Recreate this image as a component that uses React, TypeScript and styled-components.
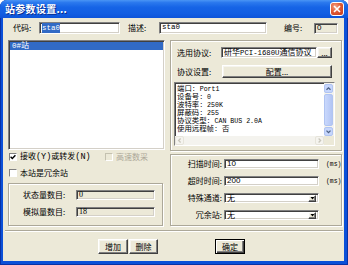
import React from "react";
import styled, { createGlobalStyle, css } from "styled-components";

const CJK = `"Noto Sans CJK SC", "Liberation Sans", sans-serif`;
const FAMILIES = {
  mono: `"Liberation Mono", "Noto Sans CJK SC", monospace`,
  sans: `"Liberation Sans", "Noto Sans CJK SC", sans-serif`,
  serif: `"Liberation Serif", "Noto Sans CJK SC", serif`,
};

const GlobalStyle = createGlobalStyle`
  html, body { margin: 0; padding: 0; background: #ffffff; }
  #root { width: 348px; height: 265px; }
  * { box-sizing: border-box; }
`;

const Window = styled.div`
  width: 348px;
  height: 265px;
  display: flex;
  flex-direction: column;
  background: #0b50d8;
  border-radius: 7px 7px 0 0;
  overflow: hidden;
  font-family: ${CJK};
  font-size: 8px;
  line-height: 1;
  color: #000;
  box-shadow: inset 1px 0 0 #0832a6, inset -1px 0 0 #0832a6, inset 0 -1px 0 #0832a6;
`;

const TitleBar = styled.div`
  flex: none;
  height: 18px;
  display: flex;
  align-items: center;
  justify-content: space-between;
  padding: 0 4px 0 5px;
  background: linear-gradient(180deg, #4a95f5 0%, #2b79ee 14%, #1664e6 40%, #125ee2 75%, #0d54d9 100%);
`;

const Title = styled.span`
  color: #fff;
  font-weight: bold;
  font-size: 10px;
  letter-spacing: 0.3px;
  text-shadow: 1px 1px 0 #0a2c8c;
`;

const CloseButton = styled.div`
  width: 14px;
  height: 14px;
  border: 1px solid #fff;
  border-radius: 3px;
  background: radial-gradient(circle at 35% 30%, #f4a489 0%, #e25c36 45%, #c4391a 100%);
  display: flex;
  align-items: center;
  justify-content: center;
`;

const Client = styled.div`
  flex: 1;
  margin: 0 4px 4px 3px;
  background: #ece9d8;
  padding: 4px 3px 0 5px;
  display: flex;
  flex-direction: column;
`;

const TopRow = styled.div`
  display: flex;
  align-items: center;
  height: 12px;
`;

const FieldLabel = styled.span<{ $w: number; $ml?: number; $right?: boolean }>`
  flex: none;
  width: ${(p) => p.$w}px;
  margin-left: ${(p) => p.$ml ?? 0}px;
  white-space: nowrap;
  text-align: ${(p) => (p.$right ? "right" : "left")};
`;

const sunken = css`
  border: 1px solid;
  border-color: #808080 #ffffff #ffffff #808080;
  box-shadow: inset 1px 1px 0 #404040, inset -1px -1px 0 #d4d0c8;
`;

const raised = css`
  border: 1px solid;
  border-color: #ffffff #404040 #404040 #ffffff;
  box-shadow: inset -1px -1px 0 #808080, inset 1px 1px 0 #f5f4ee;
`;

const Field = styled.div<{ $w?: number; $h: number; $readOnly?: boolean }>`
  flex: none;
  width: ${(p) => (p.$w ? `${p.$w}px` : "auto")};
  height: ${(p) => p.$h}px;
  background: ${(p) => (p.$readOnly ? "#ece9d8" : "#ffffff")};
  ${sunken};
  display: flex;
  align-items: center;
  padding: 0 2px 0 2px;
  white-space: nowrap;
  overflow: hidden;
`;

const FieldText = styled.span`
  flex: 1;
  min-width: 0;
  white-space: nowrap;
`;

const Latin = styled.span<{ $font?: "mono" | "sans" | "serif"; $size?: number }>`
  font-family: ${(p) => FAMILIES[p.$font ?? "mono"]};
  font-size: ${(p) => p.$size ?? 7.5}px;
`;

const Selected = styled.span`
  background: #316ac5;
  color: #fff;
  padding: 1px 0;
`;

const Main = styled.div`
  display: flex;
  gap: 5px;
  margin-top: 6px;
  height: 186px;
`;

const LeftCol = styled.div`
  width: 157px;
  flex: none;
  display: flex;
  flex-direction: column;
`;

const RightCol = styled.div`
  flex: 1;
  display: flex;
  flex-direction: column;
  gap: 3px;
`;

const ListBox = styled.div`
  height: 110px;
  background: #fff;
  ${sunken};
  padding: 1px;
`;

const ListItem = styled.div<{ $selected?: boolean }>`
  height: 8px;
  display: flex;
  align-items: center;
  padding-left: 2px;
  background: ${(p) => (p.$selected ? "#316ac5" : "transparent")};
  color: ${(p) => (p.$selected ? "#fff" : "#000")};
`;

const CheckRow = styled.div<{ $mt: number }>`
  display: grid;
  grid-template-columns: 96px auto;
  align-items: center;
  height: 9px;
  margin-top: ${(p) => p.$mt}px;
  padding-left: 1px;
`;

const Check = styled.span<{ $disabled?: boolean }>`
  display: flex;
  align-items: center;
  gap: 3px;
  white-space: nowrap;
  color: ${(p) => (p.$disabled ? "#aca899" : "#000")};
`;

const Box = styled.span<{ $disabled?: boolean }>`
  flex: none;
  width: 8px;
  height: 8px;
  background: ${(p) => (p.$disabled ? "#ece9d8" : "#fff")};
  border: 1px solid;
  border-color: ${(p) => (p.$disabled ? "#c4c1b0 #fff #fff #c4c1b0" : "#808080 #fff #fff #808080")};
  display: flex;
  align-items: center;
  justify-content: center;
`;

const etched = css`
  border: 1px solid #aca899;
  box-shadow: inset 1px 1px 0 #ffffff, 1px 1px 0 #ffffff;
`;

const CountGroup = styled.div`
  ${etched};
  margin-top: 6px;
  width: 155px;
  height: 43px;
  padding: 6px 0 0 14px;
  display: grid;
  grid-template-columns: 53px 79px;
  grid-auto-rows: 10px;
  row-gap: 7px;
  align-items: center;
`;

const ProtocolGroup = styled.div`
  ${etched};
  height: 111px;
  flex: none;
  padding: 6px 6px 0 3px;
  display: flex;
  flex-direction: column;
`;

const ProtoRow = styled.div<{ $h: number; $mt?: number }>`
  display: flex;
  align-items: center;
  height: ${(p) => p.$h}px;
  margin-top: ${(p) => p.$mt ?? 0}px;
  padding: 0 2px 0 3px;
`;

const Button = styled.button<{ $w: number; $h: number; $default?: boolean }>`
  flex: none;
  width: ${(p) => p.$w}px;
  height: ${(p) => p.$h}px;
  padding: 0;
  margin: 0;
  font-family: ${CJK};
  font-size: 8px;
  line-height: 1;
  color: #000;
  background: #ece9d8;
  ${raised};
  display: flex;
  align-items: center;
  justify-content: center;
  ${(p) =>
    p.$default &&
    css`
      border: 1px solid #000;
      box-shadow: inset 1px 1px 0 #ffffff, inset -1px -1px 0 #404040, inset -2px -2px 0 #808080;
    `}
`;

const TextArea = styled.div`
  margin-top: 4px;
  height: 64px;
  background: #fff;
  ${sunken};
  display: grid;
  grid-template-columns: 1fr 10px;
  grid-template-rows: 1fr 9px;
`;

const Lines = styled.div`
  padding: 1px 0 0 2px;
  overflow: hidden;
  font-size: 7.4px;
`;

const Line = styled.div`
  height: 8px;
  line-height: 8px;
  white-space: nowrap;
`;

const VScroll = styled.div`
  display: flex;
  flex-direction: column;
  background: #f4f3ee;
  padding-top: 1px;
`;

const HScroll = styled.div`
  display: flex;
  background: #f4f3ee;
`;

const Corner = styled.div`
  background: #ece9d8;
`;

const ArrowBtn = styled.div<{ $disabled?: boolean }>`
  flex: none;
  width: 9px;
  height: 9px;
  border-radius: 2px;
  background: ${(p) => (p.$disabled ? "#f5f4ef" : "#c6d6fc")};
  border: 1px solid ${(p) => (p.$disabled ? "#e6e4da" : "#b0c4f2")};
  display: flex;
  align-items: center;
  justify-content: center;
`;

const Thumb = styled.div`
  flex: 1;
  margin: 1px 0;
  width: 9px;
  border-radius: 2px;
  background: linear-gradient(90deg, #c9d8fc, #bccdf8 60%, #b2c5f3);
  border: 1px solid #b0c4f2;
`;

const Track = styled.div`
  flex: 1;
`;

const TimingGroup = styled.div`
  ${etched};
  flex: 1;
  padding: 4px 0 0 0;
  display: grid;
  grid-template-columns: 51px 95px auto;
  grid-auto-rows: 10px;
  column-gap: 2px;
  row-gap: 7px;
  align-content: start;
  align-items: center;
`;

const Unit = styled.span`
  padding-left: 5px;
  white-space: nowrap;
`;

const DropBtn = styled.span`
  flex: none;
  width: 8px;
  height: 7px;
  background: #ece9d8;
  ${raised};
  display: flex;
  align-items: center;
  justify-content: center;
`;

const Separator = styled.div`
  height: 2px;
  margin: 4px -2px 0 -3px;
  border-top: 1px solid #aca899;
  border-bottom: 1px solid #ffffff;
`;

const ButtonRow = styled.div`
  display: flex;
  height: 15px;
  margin-top: 7px;
  padding-left: 90px;
  gap: 1px;
`;

const Spacer = styled.div<{ $w: number }>`
  flex: none;
  width: ${(p) => p.$w}px;
`;

const CheckMark = () => (
  <svg width="6" height="6" viewBox="0 0 6 6">
    <path d="M0.6 2.8 L2.3 4.5 L5.4 1.2" fill="none" stroke="#000" strokeWidth="1.4" />
  </svg>
);

const Chevron = ({ dir, color }: { dir: "up" | "down" | "left" | "right"; color: string }) => {
  const d = {
    up: "M1.5 4.8 L3.5 2.8 L5.5 4.8",
    down: "M1.5 2.6 L3.5 4.6 L5.5 2.6",
    left: "M4.6 1.5 L2.6 3.5 L4.6 5.5",
    right: "M2.6 1.5 L4.6 3.5 L2.6 5.5",
  }[dir];
  return (
    <svg width="7" height="7" viewBox="0 0 7 7">
      <path d={d} fill="none" stroke={color} strokeWidth="1.3" />
    </svg>
  );
};

const DownTriangle = () => (
  <svg width="5" height="4" viewBox="0 0 5 4">
    <polygon points="0.5,1 4.5,1 2.5,3.4" fill="#000" />
  </svg>
);

const infoLines: [string, string, string][] = [
  ["端口", ": Port1", ""],
  ["设备号", ": 0", ""],
  ["波特率", ": 250K", ""],
  ["屏蔽码", ": 255", ""],
  ["协议类型", ": CAN BUS 2.0A", ""],
  ["使用远程帧", ": ", "否"],
];

export default function App() {
  return (
    <>
      <GlobalStyle />
      <Window>
        <TitleBar>
          <Title>站参数设置...</Title>
          <CloseButton>
            <svg width="8" height="8" viewBox="0 0 8 8">
              <path d="M1 1 L7 7 M7 1 L1 7" stroke="#fff" strokeWidth="1.6" />
            </svg>
          </CloseButton>
        </TitleBar>
        <Client>
          <TopRow>
            <FieldLabel $w={26} $ml={5}>代码:</FieldLabel>
            <Field $w={81} $h={12}>
              <Selected>
                <Latin>sta0</Latin>
              </Selected>
            </Field>
            <FieldLabel $w={31} $ml={8}>描述:</FieldLabel>
            <Field $w={108} $h={12}>
              <Latin>sta0</Latin>
            </Field>
            <FieldLabel $w={30} $ml={17}>编号:</FieldLabel>
            <Field $w={24} $h={11} $readOnly>
              <Latin $font="sans" $size={8}>0</Latin>
            </Field>
          </TopRow>
          <Main>
            <LeftCol>
              <ListBox>
                <ListItem $selected>
                  <FieldText>
                    <Latin>0#</Latin>站
                  </FieldText>
                </ListItem>
              </ListBox>
              <CheckRow $mt={2}>
                <Check>
                  <Box>
                    <CheckMark />
                  </Box>
                  <span>
                    接收<Latin $size={8.5}>(Y)</Latin>或转发<Latin $size={8.5}>(N)</Latin>
                  </span>
                </Check>
                <Check $disabled>
                  <Box $disabled />
                  <span>高速数采</span>
                </Check>
              </CheckRow>
              <CheckRow $mt={7}>
                <Check>
                  <Box />
                  <span>本站是冗余站</span>
                </Check>
              </CheckRow>
              <CountGroup>
                <span>状态量数目:</span>
                <Field $h={10} $readOnly>
                  <Latin $font="serif" $size={8}>0</Latin>
                </Field>
                <span>模拟量数目:</span>
                <Field $h={10} $readOnly>
                  <Latin $font="serif" $size={8}>18</Latin>
                </Field>
              </CountGroup>
            </LeftCol>
            <RightCol>
              <ProtocolGroup>
                <ProtoRow $h={11}>
                  <FieldLabel $w={44}>选用协议:</FieldLabel>
                  <Field $w={96} $h={11}>
                    <FieldText>
                      研华<Latin $size={7.3}>PCI-1680U</Latin>通信协议
                    </FieldText>
                  </Field>
                  <Button $w={15} $h={11}>...</Button>
                </ProtoRow>
                <ProtoRow $h={13} $mt={7}>
                  <FieldLabel $w={45}>协议设置:</FieldLabel>
                  <Button $w={110} $h={13}>配置...</Button>
                </ProtoRow>
                <TextArea>
                  <Lines>
                    {infoLines.map(([k, v, tail]) => (
                      <Line key={k}>
                        {k}
                        <Latin $size={6.6}>{v}</Latin>
                        {tail}
                      </Line>
                    ))}
                  </Lines>
                  <VScroll>
                    <ArrowBtn>
                      <Chevron dir="up" color="#4d6185" />
                    </ArrowBtn>
                    <Thumb />
                    <ArrowBtn>
                      <Chevron dir="down" color="#4d6185" />
                    </ArrowBtn>
                  </VScroll>
                  <HScroll>
                    <ArrowBtn $disabled>
                      <Chevron dir="left" color="#c9c7bc" />
                    </ArrowBtn>
                    <Track />
                    <ArrowBtn $disabled>
                      <Chevron dir="right" color="#c9c7bc" />
                    </ArrowBtn>
                  </HScroll>
                  <Corner />
                </TextArea>
              </ProtocolGroup>
              <TimingGroup>
                <FieldLabel $w={51} $right>扫描时间:</FieldLabel>
                <Field $h={10}>
                  <Latin $font="sans" $size={8}>10</Latin>
                </Field>
                <Unit>
                  <Latin $size={6.4}>(ms)</Latin>
                </Unit>
                <FieldLabel $w={51} $right>超时时间:</FieldLabel>
                <Field $h={10}>
                  <Latin $font="sans" $size={8}>200</Latin>
                </Field>
                <Unit>
                  <Latin $size={6.4}>(ms)</Latin>
                </Unit>
                <FieldLabel $w={51} $right>特殊通道:</FieldLabel>
                <Field $h={10}>
                  <FieldText>无</FieldText>
                  <DropBtn>
                    <DownTriangle />
                  </DropBtn>
                </Field>
                <span />
                <FieldLabel $w={51} $right>冗余站:</FieldLabel>
                <Field $h={10}>
                  <FieldText>无</FieldText>
                  <DropBtn>
                    <DownTriangle />
                  </DropBtn>
                </Field>
                <span />
              </TimingGroup>
            </RightCol>
          </Main>
          <Separator />
          <ButtonRow>
            <Button $w={30} $h={15}>增加</Button>
            <Button $w={29} $h={15}>删除</Button>
            <Spacer $w={55} />
            <Button $w={30} $h={15} $default>确定</Button>
          </ButtonRow>
        </Client>
      </Window>
    </>
  );
}
